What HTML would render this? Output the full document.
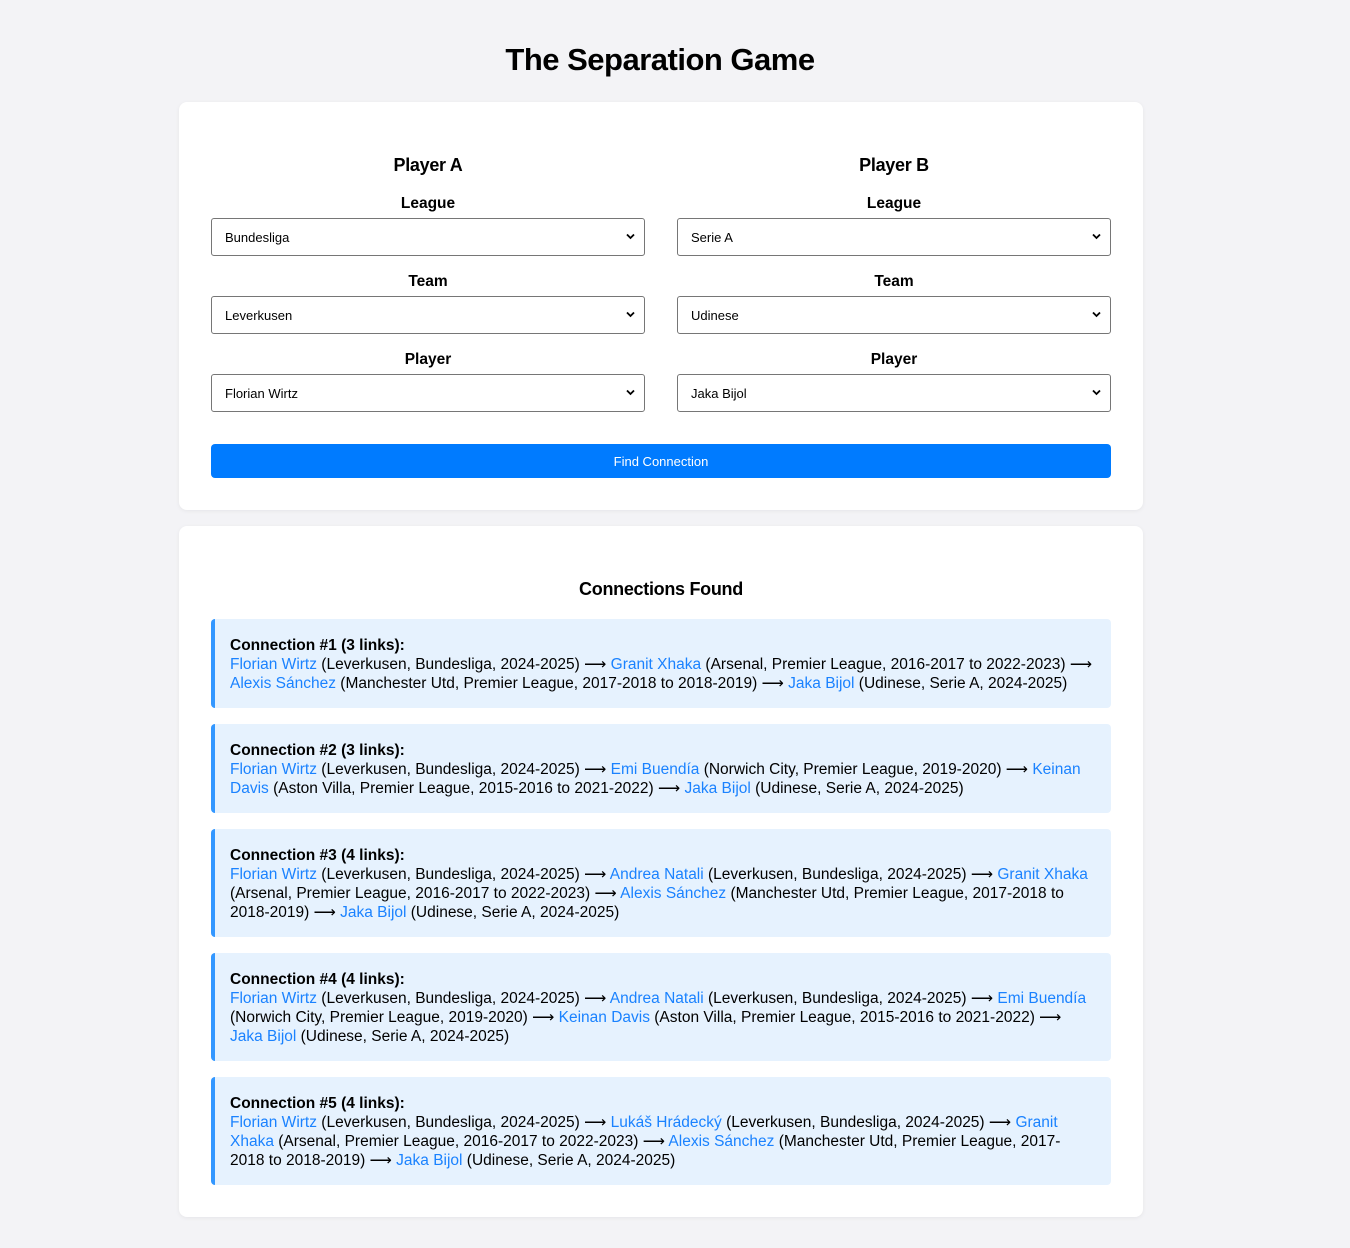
<!DOCTYPE html>
<html><head><meta charset="utf-8"><style>
*{box-sizing:border-box}
body{margin:0;background:#f3f3f6;font-family:"Liberation Sans",Arial,sans-serif;color:#000}
h1{margin:0;position:absolute;top:42px;left:0;width:1320px;text-align:center;font-size:31px;font-weight:bold;letter-spacing:-0.5px}
.card{position:absolute;left:179px;width:964px;background:#fff;border-radius:8px;box-shadow:0 1px 4px rgba(0,0,0,.06)}
.col{position:absolute;top:0;width:434px;text-align:center}
.col h3{position:absolute;top:52px;left:0;width:100%;margin:0;font-size:18px;line-height:22px;letter-spacing:-0.3px}
.lab{position:absolute;left:0;width:100%;font-weight:bold;font-size:15.5px;line-height:18px}
.sel{position:absolute;left:0;width:434px;height:38px;border:1px solid #767676;border-radius:3px;text-align:left;font-size:13px;padding:0 0 0 13px;line-height:37px}
.sel svg{position:absolute;right:9px;top:14px}
.btn{position:absolute;left:32px;top:342px;width:900px;height:34px;background:#007bff;border-radius:4px;color:#fff;font-size:13px;text-align:center;line-height:35px}
h2{position:absolute;top:52px;left:0;width:964px;text-align:center;margin:0;font-size:18px;line-height:22px;letter-spacing:-0.3px}
.it{position:absolute;left:32px;width:900px;background:#e6f2fe;border-left:4px solid #3397ff;border-radius:4px;padding:17px 0 0 15px;font-size:15.5px;line-height:19px;white-space:nowrap}
.it b{font-size:15.5px}
.a{color:#1a82ff}
</style></head><body>
<h1>The Separation Game</h1>
<div class="card" style="top:102px;height:408px">
 <div class="col" style="left:32px">
  <h3>Player A</h3>
  <div class="lab" style="top:93px">League</div>
  <div class="sel" style="top:116px">Bundesliga<svg width="9" height="7" viewBox="0 0 9 7"><path d="M1 1.5l3.5 3.5 3.5-3.5" stroke="#000" stroke-width="1.8" fill="none"/></svg></div>
  <div class="lab" style="top:171px">Team</div>
  <div class="sel" style="top:194px">Leverkusen<svg width="9" height="7" viewBox="0 0 9 7"><path d="M1 1.5l3.5 3.5 3.5-3.5" stroke="#000" stroke-width="1.8" fill="none"/></svg></div>
  <div class="lab" style="top:249px">Player</div>
  <div class="sel" style="top:272px">Florian Wirtz<svg width="9" height="7" viewBox="0 0 9 7"><path d="M1 1.5l3.5 3.5 3.5-3.5" stroke="#000" stroke-width="1.8" fill="none"/></svg></div>
 </div>
 <div class="col" style="left:498px">
  <h3>Player B</h3>
  <div class="lab" style="top:93px">League</div>
  <div class="sel" style="top:116px">Serie A<svg width="9" height="7" viewBox="0 0 9 7"><path d="M1 1.5l3.5 3.5 3.5-3.5" stroke="#000" stroke-width="1.8" fill="none"/></svg></div>
  <div class="lab" style="top:171px">Team</div>
  <div class="sel" style="top:194px">Udinese<svg width="9" height="7" viewBox="0 0 9 7"><path d="M1 1.5l3.5 3.5 3.5-3.5" stroke="#000" stroke-width="1.8" fill="none"/></svg></div>
  <div class="lab" style="top:249px">Player</div>
  <div class="sel" style="top:272px">Jaka Bijol<svg width="9" height="7" viewBox="0 0 9 7"><path d="M1 1.5l3.5 3.5 3.5-3.5" stroke="#000" stroke-width="1.8" fill="none"/></svg></div>
 </div>
 <div class="btn">Find Connection</div>
</div>
<div class="card" style="top:526px;height:691px">
 <h2>Connections Found</h2>
 <div class="it" style="top:93px;height:89px"><b>Connection #1 (3 links):</b><br><span class="a">Florian Wirtz</span> (Leverkusen, Bundesliga, 2024-2025) ⟶ <span class="a">Granit Xhaka</span> (Arsenal, Premier League, 2016-2017 to 2022-2023) ⟶<br><span class="a">Alexis Sánchez</span> (Manchester Utd, Premier League, 2017-2018 to 2018-2019) ⟶ <span class="a">Jaka Bijol</span> (Udinese, Serie A, 2024-2025)</div>
 <div class="it" style="top:198px;height:89px"><b>Connection #2 (3 links):</b><br><span class="a">Florian Wirtz</span> (Leverkusen, Bundesliga, 2024-2025) ⟶ <span class="a">Emi Buendía</span> (Norwich City, Premier League, 2019-2020) ⟶ <span class="a">Keinan</span><br><span class="a">Davis</span> (Aston Villa, Premier League, 2015-2016 to 2021-2022) ⟶ <span class="a">Jaka Bijol</span> (Udinese, Serie A, 2024-2025)</div>
 <div class="it" style="top:303px;height:108px"><b>Connection #3 (4 links):</b><br><span class="a">Florian Wirtz</span> (Leverkusen, Bundesliga, 2024-2025) ⟶ <span class="a">Andrea Natali</span> (Leverkusen, Bundesliga, 2024-2025) ⟶ <span class="a">Granit Xhaka</span><br>(Arsenal, Premier League, 2016-2017 to 2022-2023) ⟶ <span class="a">Alexis Sánchez</span> (Manchester Utd, Premier League, 2017-2018 to<br>2018-2019) ⟶ <span class="a">Jaka Bijol</span> (Udinese, Serie A, 2024-2025)</div>
 <div class="it" style="top:427px;height:108px"><b>Connection #4 (4 links):</b><br><span class="a">Florian Wirtz</span> (Leverkusen, Bundesliga, 2024-2025) ⟶ <span class="a">Andrea Natali</span> (Leverkusen, Bundesliga, 2024-2025) ⟶ <span class="a">Emi Buendía</span><br>(Norwich City, Premier League, 2019-2020) ⟶ <span class="a">Keinan Davis</span> (Aston Villa, Premier League, 2015-2016 to 2021-2022) ⟶<br><span class="a">Jaka Bijol</span> (Udinese, Serie A, 2024-2025)</div>
 <div class="it" style="top:551px;height:108px"><b>Connection #5 (4 links):</b><br><span class="a">Florian Wirtz</span> (Leverkusen, Bundesliga, 2024-2025) ⟶ <span class="a">Lukáš Hrádecký</span> (Leverkusen, Bundesliga, 2024-2025) ⟶ <span class="a">Granit</span><br><span class="a">Xhaka</span> (Arsenal, Premier League, 2016-2017 to 2022-2023) ⟶ <span class="a">Alexis Sánchez</span> (Manchester Utd, Premier League, 2017-<br>2018 to 2018-2019) ⟶ <span class="a">Jaka Bijol</span> (Udinese, Serie A, 2024-2025)</div>
</div>
</body></html>
